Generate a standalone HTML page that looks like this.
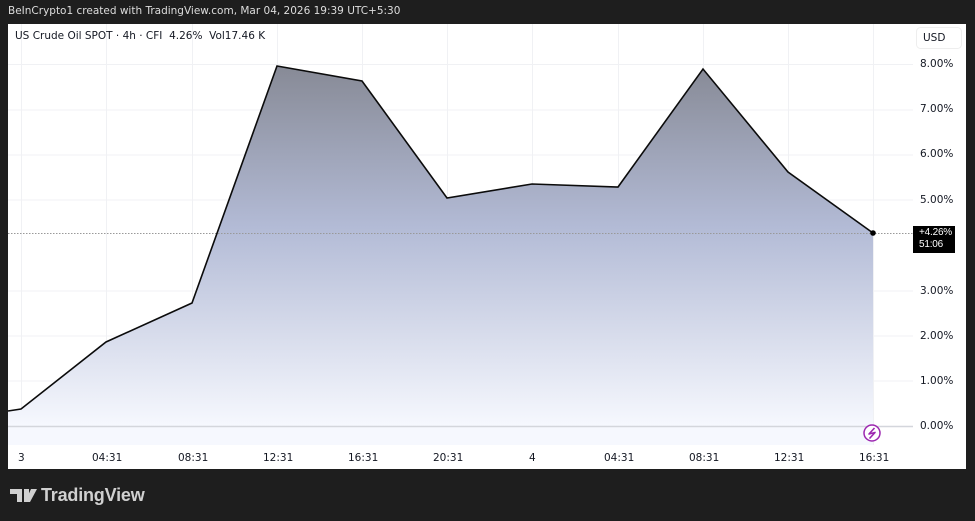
<!DOCTYPE html>
<html><head><style>
body{margin:0;width:975px;height:521px;background:#1e1e1e;font-family:"DejaVu Sans","Liberation Sans",sans-serif;overflow:hidden;position:relative}
.t{position:absolute;font-size:10.5px;color:#131722}
</style></head><body>
<div style="position:absolute;left:8px;top:5px;color:#ddd;font-size:10.5px">BeInCrypto1 created with TradingView.com, Mar 04, 2026 19:39 UTC+5:30</div>
<div style="position:absolute;left:8px;top:24px;width:958px;height:445px;background:#fff"></div>
<svg style="position:absolute;left:0;top:0" width="975" height="521">
<defs><linearGradient id="g" x1="0" y1="66" x2="0" y2="426" gradientUnits="userSpaceOnUse"><stop offset="0" stop-color="#878a96"/><stop offset="0.45" stop-color="#b3bbd6"/><stop offset="1" stop-color="#f6f8fe"/></linearGradient></defs>
<g stroke="#f0f1f4" stroke-width="1">
<line x1="21.5" y1="24" x2="21.5" y2="445"/><line x1="106.5" y1="24" x2="106.5" y2="445"/><line x1="192.5" y1="24" x2="192.5" y2="445"/><line x1="277.5" y1="24" x2="277.5" y2="445"/><line x1="362.5" y1="24" x2="362.5" y2="445"/><line x1="447.5" y1="24" x2="447.5" y2="445"/><line x1="532.5" y1="24" x2="532.5" y2="445"/><line x1="618.5" y1="24" x2="618.5" y2="445"/><line x1="703.5" y1="24" x2="703.5" y2="445"/><line x1="788.5" y1="24" x2="788.5" y2="445"/><line x1="873.5" y1="24" x2="873.5" y2="445"/>
<line x1="8" y1="64.5" x2="913" y2="64.5"/><line x1="8" y1="110" x2="913" y2="110"/><line x1="8" y1="155" x2="913" y2="155"/><line x1="8" y1="200" x2="913" y2="200"/><line x1="8" y1="291" x2="913" y2="291"/><line x1="8" y1="336" x2="913" y2="336"/><line x1="8" y1="381" x2="913" y2="381"/>
</g>
<path d="M8,411 L21,409 L106,342 L192,303 L277,66 L362,81 L447,198 L532,184 L618,187 L703,69 L788,172 L873,233 L873,445 L8,445Z" fill="url(#g)"/>
<line x1="8" y1="426.5" x2="913" y2="426.5" stroke="#d4d6dc" stroke-width="1.5"/>
<line x1="8" y1="233.5" x2="913" y2="233.5" stroke="#999" stroke-dasharray="1.5,1.5"/>
<path d="M8,411 L21,409 L106,342 L192,303 L277,66 L362,81 L447,198 L532,184 L618,187 L703,69 L788,172 L873,233" fill="none" stroke="#0b0b0b" stroke-width="1.6"/>
<circle cx="873" cy="233" r="2.8" fill="#000"/>
<circle cx="872" cy="433" r="8" fill="#fff" stroke="#9c27b0" stroke-width="1.5"/>
<path d="M874.5,428 L869,434 L875,432.5 L869.5,438.5" fill="none" stroke="#9c27b0" stroke-width="1.6" stroke-linejoin="round"/>
<rect x="916.5" y="27.5" width="45" height="21" rx="4" fill="#fff" stroke="#eee"/>
</svg>
<div class="t" style="left:15px;top:30px">US Crude Oil SPOT · 4h · CFI&nbsp; 4.26%&nbsp; Vol17.46 K</div>
<div class="t" style="left:923px;top:32px">USD</div>
<div class="t" style="left:920px;top:58px">8.00%</div>
<div class="t" style="left:920px;top:103px">7.00%</div>
<div class="t" style="left:920px;top:148px">6.00%</div>
<div class="t" style="left:920px;top:194px">5.00%</div>
<div class="t" style="left:920px;top:285px">3.00%</div>
<div class="t" style="left:920px;top:330px">2.00%</div>
<div class="t" style="left:920px;top:375px">1.00%</div>
<div class="t" style="left:920px;top:420px">0.00%</div>
<div style="position:absolute;left:913px;top:226px;width:42px;height:27px;background:#000;color:#fff;font-family:'Liberation Sans',sans-serif;font-size:10px;line-height:12px;padding:1px 0 0 6px;box-sizing:border-box;letter-spacing:-0.2px">+4.26%<br>51:06</div>
<div class="t" style="left:18px;top:452px">3</div>
<div class="t" style="left:92px;top:452px">04:31</div>
<div class="t" style="left:178px;top:452px">08:31</div>
<div class="t" style="left:263px;top:452px">12:31</div>
<div class="t" style="left:348px;top:452px">16:31</div>
<div class="t" style="left:433px;top:452px">20:31</div>
<div class="t" style="left:529px;top:452px">4</div>
<div class="t" style="left:604px;top:452px">04:31</div>
<div class="t" style="left:689px;top:452px">08:31</div>
<div class="t" style="left:774px;top:452px">12:31</div>
<div class="t" style="left:859px;top:452px">16:31</div>
<svg style="position:absolute;left:10px;top:488px" width="28" height="15"><path d="M0,1H12V14H7V6H0Z M14,1H19V14H14Z M21,1H27L20,14H15Z" fill="#d0d0d0"/></svg>
<div style="position:absolute;left:41px;top:485px;color:#d0d0d0;font-family:'Liberation Sans',sans-serif;font-size:18px;font-weight:bold;letter-spacing:-0.2px">TradingView</div>
</body></html>
